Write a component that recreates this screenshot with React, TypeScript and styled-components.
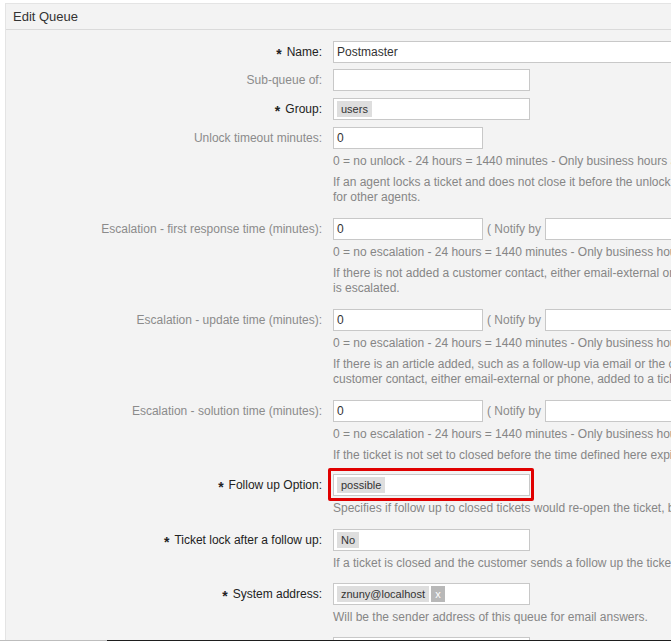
import React from "react";
import styled, { createGlobalStyle } from "styled-components";

const GlobalStyle = createGlobalStyle`
  html, body {
    margin: 0;
    padding: 0;
    background: #ffffff;
    overflow: hidden;
  }
  body {
    font-family: "Liberation Sans", Arial, sans-serif;
    font-size: 12px;
    color: #333;
  }
`;

const Page = styled.div`
  padding: 3px 0 0 5px;
  width: 1200px;
`;

const Panel = styled.section`
  width: 1100px;
  background: #f3f3f3;
  border: 1px solid #e4e4e4;
`;

const PanelHeader = styled.h2`
  margin: 0;
  height: 25px;
  line-height: 25px;
  padding: 0 7px;
  font-size: 13px;
  font-weight: normal;
  color: #333;
  border-bottom: 1px solid #dadada;
`;

const Form = styled.div`
  padding-top: 11px;
  display: flex;
  flex-direction: column;
`;

const Row = styled.div<{ $gap: number }>`
  display: grid;
  grid-template-columns: 316px 1fr;
  column-gap: 11px;
  align-items: start;
  margin-bottom: ${(p) => p.$gap}px;
`;

const Label = styled.label<{ $required?: boolean }>`
  display: block;
  text-align: right;
  line-height: 22px;
  height: 22px;
  overflow: visible;
  white-space: nowrap;
  color: ${(p) => (p.$required ? "#222" : "#8b8b8b")};
`;

const Marker = styled.span`
  display: inline-block;
  font-weight: bold;
  font-size: 14px;
  line-height: 10px;
  position: relative;
  top: 3px;
  margin-right: 5px;
  color: #222;
`;

const Field = styled.div`
  display: flex;
  flex-direction: column;
`;

const InputLine = styled.div`
  display: flex;
  align-items: center;
  gap: 4px;
`;

const TextInput = styled.input<{ $width: number }>`
  box-sizing: border-box;
  width: ${(p) => p.$width}px;
  height: 22px;
  margin: 0;
  border: 1px solid #c8c8c8;
  background: #fff;
  padding: 0 3px;
  font-family: "Liberation Sans", Arial, sans-serif;
  font-size: 12px;
  color: #333;
  outline: none;
`;

const SelectBox = styled.div<{ $width: number }>`
  box-sizing: border-box;
  position: relative;
  width: ${(p) => p.$width}px;
  height: 22px;
  border: 1px solid #c8c8c8;
  background: #fff;
  display: flex;
  align-items: center;
  padding: 0 3px;
`;

const Tag = styled.span`
  display: inline-flex;
  align-items: center;
  height: 16px;
  padding: 0 4px;
  background: #dedede;
  color: #333;
  font-size: 11px;
  white-space: nowrap;
`;

const TagRemove = styled.span`
  display: inline-flex;
  align-items: center;
  justify-content: center;
  width: 14px;
  height: 16px;
  background: #b8b8b8;
  color: #fff;
  font-size: 11px;
  margin-left: 2px;
`;

const NotifyText = styled.span`
  color: #8b8b8b;
  white-space: nowrap;
`;

const Highlight = styled.div`
  position: absolute;
  left: -6px;
  top: -7px;
  width: 206px;
  height: 33px;
  box-sizing: border-box;
  border: 3px solid #e00000;
  border-radius: 2px;
  pointer-events: none;
`;

const Desc = styled.p`
  margin: 5px 0 0;
  line-height: 15px;
  color: #868686;
  white-space: nowrap;
  & + & {
    margin-top: 6px;
  }
`;

const BottomBar = styled.div`
  position: fixed;
  left: 0;
  right: 0;
  bottom: 0;
  height: 1px;
  display: grid;
  grid-template-columns: 107px 1fr;
`;

const BarSegment = styled.div<{ $dark?: boolean }>`
  background: ${(p) => (p.$dark ? "#1e1e1e" : "#bdbdbd")};
`;

const Req = ({ children }: { children: React.ReactNode }) => (
  <Label $required>
    <Marker>*</Marker>
    {children}
  </Label>
);

const Notify = () => (
  <>
    <NotifyText>( Notify by</NotifyText>
    <SelectBox $width={200} />
  </>
);

export default function App() {
  return (
    <>
      <GlobalStyle />
      <Page>
        <Panel>
          <PanelHeader>Edit Queue</PanelHeader>
          <Form>
            <Row $gap={6}>
              <Req>Name:</Req>
              <Field>
                <TextInput $width={420} defaultValue="Postmaster" readOnly />
              </Field>
            </Row>
            <Row $gap={7}>
              <Label>Sub-queue of:</Label>
              <Field>
                <SelectBox $width={197} />
              </Field>
            </Row>
            <Row $gap={7}>
              <Req>Group:</Req>
              <Field>
                <SelectBox $width={197}>
                  <Tag>users</Tag>
                </SelectBox>
              </Field>
            </Row>
            <Row $gap={13}>
              <Label>Unlock timeout minutes:</Label>
              <Field>
                <TextInput $width={150} defaultValue="0" readOnly />
                <Desc>0 = no unlock - 24 hours = 1440 minutes - Only business hours are counted.</Desc>
                <Desc>
                  If an agent locks a ticket and does not close it before the unlock timeout has passed, the ticket will unlock and will become available
                  <br />
                  for other agents.
                </Desc>
              </Field>
            </Row>
            <Row $gap={13}>
              <Label>Escalation - first response time (minutes):</Label>
              <Field>
                <InputLine>
                  <TextInput $width={150} defaultValue="0" readOnly />
                  <Notify />
                </InputLine>
                <Desc>0 = no escalation - 24 hours = 1440 minutes - Only business hours are counted.</Desc>
                <Desc>
                  If there is not added a customer contact, either email-external or phone, to a new ticket before the time defined here expires, the ticket
                  <br />
                  is escalated.
                </Desc>
              </Field>
            </Row>
            <Row $gap={13}>
              <Label>Escalation - update time (minutes):</Label>
              <Field>
                <InputLine>
                  <TextInput $width={150} defaultValue="0" readOnly />
                  <Notify />
                </InputLine>
                <Desc>0 = no escalation - 24 hours = 1440 minutes - Only business hours are counted.</Desc>
                <Desc>
                  If there is an article added, such as a follow-up via email or the customer portal, the escalation update time is reset. If there is no
                  <br />
                  customer contact, either email-external or phone, added to a ticket before the time defined here expires, the ticket is escalated.
                </Desc>
              </Field>
            </Row>
            <Row $gap={11}>
              <Label>Escalation - solution time (minutes):</Label>
              <Field>
                <InputLine>
                  <TextInput $width={150} defaultValue="0" readOnly />
                  <Notify />
                </InputLine>
                <Desc>0 = no escalation - 24 hours = 1440 minutes - Only business hours are counted.</Desc>
                <Desc>If the ticket is not set to closed before the time defined here expires, the ticket is escalated.</Desc>
              </Field>
            </Row>
            <Row $gap={13}>
              <Req>Follow up Option:</Req>
              <Field>
                <SelectBox $width={197}>
                  <Tag>possible</Tag>
                  <Highlight />
                </SelectBox>
                <Desc>Specifies if follow up to closed tickets would re-open the ticket, be rejected or lead to a new ticket.</Desc>
              </Field>
            </Row>
            <Row $gap={12}>
              <Req>Ticket lock after a follow up:</Req>
              <Field>
                <SelectBox $width={197}>
                  <Tag>No</Tag>
                </SelectBox>
                <Desc>If a ticket is closed and the customer sends a follow up the ticket will be locked to the old owner.</Desc>
              </Field>
            </Row>
            <Row $gap={12}>
              <Req>System address:</Req>
              <Field>
                <SelectBox $width={197}>
                  <Tag>znuny@localhost</Tag>
                  <TagRemove>x</TagRemove>
                </SelectBox>
                <Desc>Will be the sender address of this queue for email answers.</Desc>
              </Field>
            </Row>
            <Row $gap={12}>
              <Req>Salutation:</Req>
              <Field>
                <SelectBox $width={197}>
                  <Tag>system standard salutation (en)</Tag>
                </SelectBox>
              </Field>
            </Row>
          </Form>
        </Panel>
      </Page>
      <BottomBar>
        <BarSegment />
        <BarSegment $dark />
      </BottomBar>
    </>
  );
}
